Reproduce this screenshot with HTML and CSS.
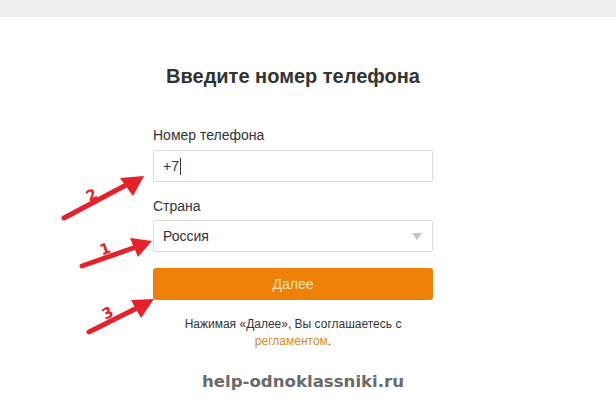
FILE: index.html
```html
<!DOCTYPE html>
<html lang="ru">
<head>
<meta charset="utf-8">
<link rel="stylesheet" href="styles.css">
</head>
<body>
<div class="topbar"></div>
<main class="page">
  <form class="form">
    <h1 class="title">Введите номер телефона</h1>
    <label class="label">Номер телефона</label>
    <div class="field"><span class="value">+7</span><span class="caret"></span></div>
    <label class="label label-country">Страна</label>
    <div class="field select"><span class="value">Россия</span><span class="tri"></span></div>
    <div class="btn">Далее</div>
    <p class="terms">Нажимая «Далее», Вы соглашаетесь с<br><a class="link">регламентом</a>.</p>
    <div class="watermark">help-odnoklassniki.ru</div>
  </form>
  <svg class="arrows" width="616" height="416" viewBox="0 0 616 416">
    <g stroke="#e5212b" stroke-width="5" stroke-linecap="round" fill="#e5212b">
      <line x1="64" y1="218" x2="128" y2="184"/>
      <polygon points="144,176 120,178 133,196" stroke="none"/>
      <line x1="82" y1="266" x2="136" y2="247"/>
      <polygon points="152,241 130,238 138,257" stroke="none"/>
      <line x1="89" y1="332" x2="139" y2="307"/>
      <polygon points="154,299 131,300 141,318" stroke="none"/>
    </g>
    <g fill="#e5212b" font-family="'DejaVu Sans', sans-serif" font-weight="bold" font-size="15">
      <text x="86" y="200" transform="rotate(-28 92 194)">2</text>
      <text x="100" y="254" transform="rotate(-20 105 249)">1</text>
      <text x="102" y="318" transform="rotate(-28 108 312)">3</text>
    </g>
  </svg>
</main>
</body>
</html>
```
FILE: styles.css
```css
* { box-sizing: border-box; }
html, body { margin: 0; padding: 0; background: #fff; }
body { font-family: "Liberation Sans", Arial, sans-serif; color: #333; width: 616px; height: 416px; overflow: hidden; }
.topbar { height: 17px; background: #efefef; }
.page { position: relative; height: 399px; }
.form { width: 280px; margin-left: 153px; padding-top: 46px; display: flex; flex-direction: column; }
.title { margin: 0 0 38px; font-size: 20px; font-weight: bold; text-align: center; color: #333; line-height: 26px; }
.label { font-size: 14px; line-height: 16px; color: #333; margin-bottom: 7px; }
.label-country { margin-top: 16px; margin-bottom: 6px; }
.field { height: 32px; border: 1px solid #dcdcdc; border-radius: 2px; display: flex; align-items: center; padding: 0 9px; font-size: 14px; color: #333; }
.caret { display: inline-block; width: 1px; height: 17px; background: #333; margin-left: 1px; }
.select { justify-content: space-between; }
.tri { width: 0; height: 0; border-left: 5px solid transparent; border-right: 5px solid transparent; border-top: 7px solid #c4c4c4; margin-right: 1px; }
.btn { margin-top: 16px; height: 32px; border-radius: 3px; background: #ee8208; color: #fde3b5; font-size: 14px; display: flex; align-items: center; justify-content: center; }
.terms { margin: 16px 0 0; text-align: center; font-size: 12px; line-height: 17px; color: #333; }
.link { color: #d08a1e; }
.watermark { margin-top: 22px; padding-left: 20px; text-align: center; font-family: "DejaVu Sans", Verdana, sans-serif; font-weight: bold; font-size: 16.6px; line-height: 19px; color: #6a6a6a; white-space: nowrap; }
.arrows { position: absolute; left: 0; top: -17px; pointer-events: none; }
```
